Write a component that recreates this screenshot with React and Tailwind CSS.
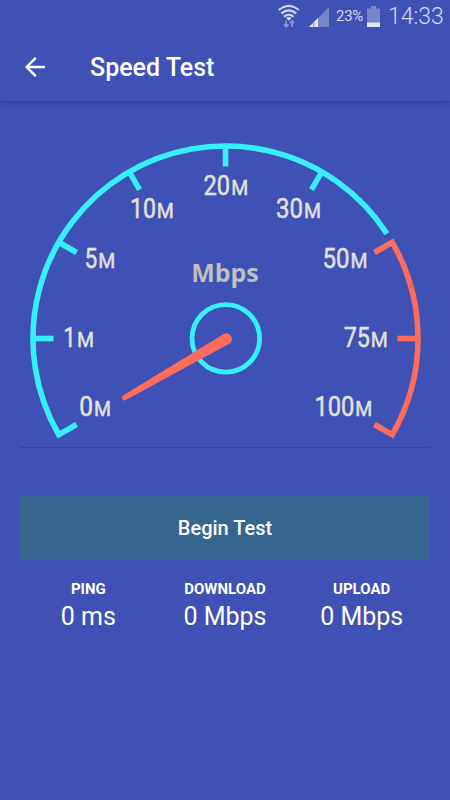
const SMALL_LABELS = [
  { n: "0", nx: 79.2, nw: 13.8, mx: 94, y: 415.7 },
  { n: "1", nx: 63.2, nw: 12.5, mx: 77, y: 346.7 },
  { n: "5", nx: 84.4, nw: 12.8, mx: 98.3, y: 268.3 },
  { n: "10", nx: 130, nw: 26, mx: 156.8, y: 217.8 },
  { n: "20", nx: 203.4, nw: 26.6, mx: 231.3, y: 195 },
  { n: "30", nx: 276, nw: 27, mx: 303.9, y: 217.8 },
  { n: "50", nx: 322.6, nw: 27, mx: 350.4, y: 268.3 },
  { n: "75", nx: 343.7, nw: 26.2, mx: 370.8, y: 346.7 },
  { n: "100", nx: 314.4, nw: 40, mx: 355.2, y: 415.7 },
];

const CX = 225.5;
const CY = 338.5;

function point(r, deg) {
  const a = (deg * Math.PI) / 180;
  return `${CX + r * Math.cos(a)} ${CY - r * Math.sin(a)}`;
}

function Gauge() {
  return (
    <svg viewBox="20 102 410 345" className="block h-[345px] w-[410px]" fill="none">
      <path
        d={`M${point(172, 210)} L${point(192.5, 210)} A192.5 192.5 0 0 1 ${point(192.5, 33)}`}
        stroke="#36f0ff"
        strokeWidth="5.6"
      />
      {[180, 150, 120, 90, 60].map((deg) => (
        <path key={deg} d={`M${point(172, deg)} L${point(192.5, deg)}`} stroke="#36f0ff" strokeWidth="5.6" />
      ))}
      <path
        d={`M${point(172, 30)} L${point(192.5, 30)} A192.5 192.5 0 0 1 ${point(192.5, -30)} L${point(172, -30)}`}
        stroke="#ff6c5c"
        strokeWidth="5.6"
      />
      <path d={`M${point(172, 0)} L${point(192.5, 0)}`} stroke="#ff6c5c" strokeWidth="5.6" />
      <circle cx="225.8" cy="338.4" r="33.8" stroke="#36f0ff" strokeWidth="4.8" />
      <path
        d="M123 395.6 L223.8 333.9 A5.6 5.6 0 0 1 229.6 343.4 L125.3 400.2 A2.6 2.6 0 0 1 123 395.6Z"
        fill="#ff6c5c"
      />
      <g fill="#e2e1de" stroke="#e2e1de" strokeWidth="0.5" fontFamily="Roboto, sans-serif" fontWeight="400">
        {SMALL_LABELS.map((l) => (
          <text key={l.n} y={l.y}>
            <tspan x={l.nx} fontSize="27.5" textLength={l.nw} lengthAdjust="spacingAndGlyphs">
              {l.n}
            </tspan>
            <tspan x={l.mx} fontSize="20.5" textLength="17" lengthAdjust="spacingAndGlyphs">
              M
            </tspan>
          </text>
        ))}
      </g>
      <text
        x="191.2"
        y="282"
        fill="#bdc0bb"
        fontFamily="Open Sans, sans-serif"
        fontWeight="700"
        fontSize="25.5"
        textLength="67.5"
        lengthAdjust="spacingAndGlyphs"
      >
        Mbps
      </text>
    </svg>
  );
}

function StatusBar() {
  return (
    <div className="flex h-[33px] items-center pl-[278px] text-[#d5d9ef]">
      <svg width="22" height="26" viewBox="278 2 22 26" className="shrink-0" fill="none">
        <g stroke="#d9dcf1" strokeWidth="2">
          <path d="M278.8 8 Q288.8 0 298.8 8" />
          <path d="M281.4 11.4 Q288.8 5.4 296.2 11.4" />
          <path d="M284 14.6 Q288.8 10.8 293.6 14.6" />
        </g>
        <path d="M286 16 Q288.8 14.1 291.6 16 L288.8 18.8Z" fill="#d9dcf1" />
        <path d="M286.2 18.5V25M283.9 22.3L286.2 24.8L288.5 22.3M292 25V18.8M289.7 21.3L292 18.8L294.3 21.3" stroke="#8c97d4" strokeWidth="1.6" />
      </svg>
      <svg width="21" height="22" viewBox="308 4 21 22" className="ml-[8px] shrink-0">
        <path d="M309 25L329 5V25Z" fill="#7984cb" />
        <path d="M309 25L318 16V25Z" fill="#e3e5f4" />
        <path d="M313.8 19V25" stroke="#6572c2" strokeWidth="0.9" />
      </svg>
      <span className="ml-[7px] w-[28px] whitespace-nowrap font-[Roboto,sans-serif] text-[15px] leading-none tracking-[-0.3px]">23%</span>
      <svg width="13" height="21" viewBox="0 0 13 21" className="ml-[3px] -mt-px shrink-0">
        <path d="M4 0H9V2.5H13V21H0V2.5H4Z" fill="#7984cb" />
        <path d="M0 16.5H13V21H0Z" fill="#e3e5f4" />
      </svg>
      <span className="ml-[8px] whitespace-nowrap font-[Roboto,sans-serif] text-[23px] font-light leading-none">14:33</span>
    </div>
  );
}

function Stat({ label, value }) {
  return (
    <div className="flex flex-1 flex-col items-center whitespace-nowrap">
      <div className="text-[15px] font-bold leading-[18px]">{label}</div>
      <div className="mt-1 text-[25px] leading-[30px]">{value}</div>
    </div>
  );
}

export default function App() {
  return (
    <div className="flex h-[800px] w-[450px] flex-col overflow-hidden bg-[#3f51b5] font-[Roboto,sans-serif] text-white">
      <header className="h-[101px] shrink-0 shadow-[0_1px_5px_rgba(0,0,0,0.3)]">
        <StatusBar />
        <div className="flex h-[68px] items-center pl-[25px]">
          <svg width="20" height="20" viewBox="0 0 20 20" fill="none" stroke="white" strokeWidth="2.4">
            <path d="M20 10H2M10.8 0.8L1.6 10L10.8 19.2" />
          </svg>
          <h1 className="ml-[45px] text-[25px] font-medium leading-none">Speed Test</h1>
        </div>
      </header>
      <main className="flex flex-col px-5 pt-px">
        <Gauge />
        <hr className="h-px border-0 bg-[#374595]" />
        <button className="mt-12 h-[63px] bg-[#35668f] text-[20px] font-medium">Begin Test</button>
        <section className="mt-[21px] flex">
          <Stat label="PING" value="0 ms" />
          <Stat label="DOWNLOAD" value="0 Mbps" />
          <Stat label="UPLOAD" value="0 Mbps" />
        </section>
      </main>
    </div>
  );
}
